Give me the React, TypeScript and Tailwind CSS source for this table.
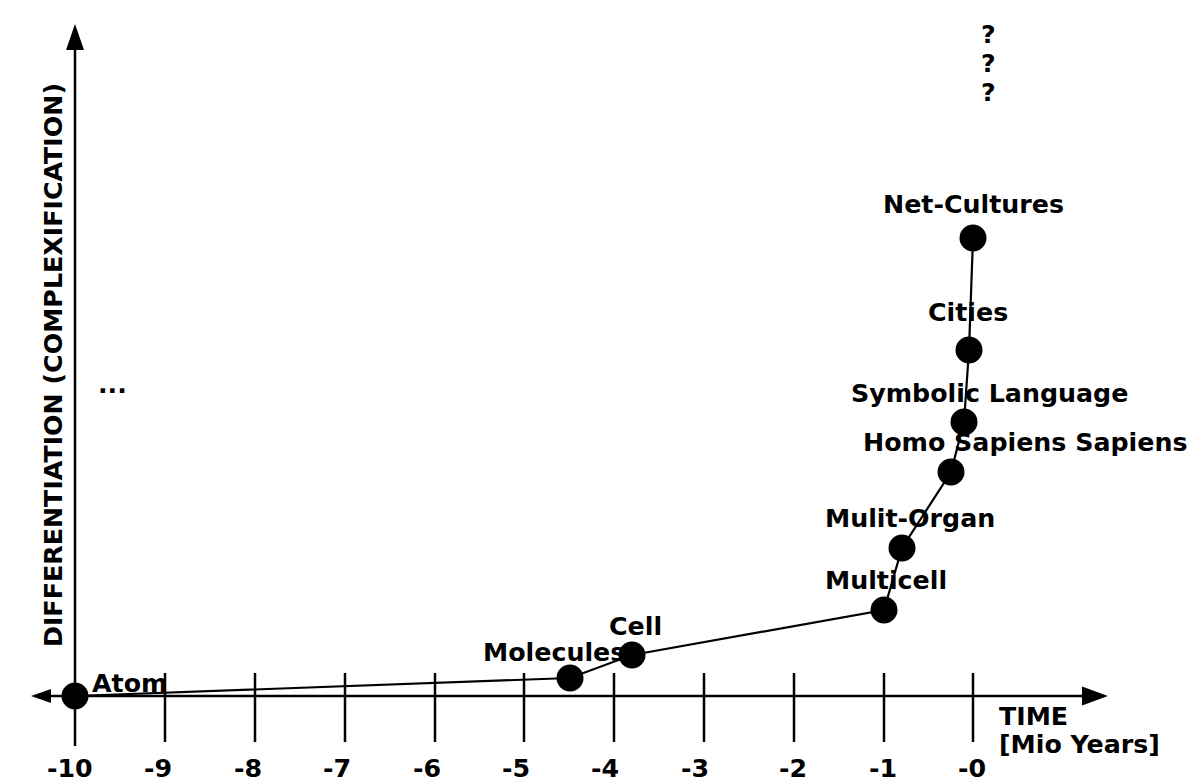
const nodes = [
  { x: 75, y: 696 },
  { x: 570, y: 678 },
  { x: 632, y: 655 },
  { x: 884, y: 610 },
  { x: 902, y: 548 },
  { x: 951, y: 472 },
  { x: 964, y: 422 },
  { x: 969, y: 350 },
  { x: 973, y: 238 },
];

const ticks = [165, 255, 345, 435, 524, 614, 704, 794, 884, 973];

const labels = [
  { text: "Atom", cls: "left-[92px] top-[671px]" },
  { text: "Molecules", cls: "left-[483px] top-[640px]" },
  { text: "Cell", cls: "left-[609px] top-[614px]" },
  { text: "Multicell", cls: "left-[825px] top-[568px]" },
  { text: "Mulit-Organ", cls: "left-[825px] top-[506px]" },
  { text: "Homo Sapiens Sapiens", cls: "left-[863px] top-[430px]" },
  { text: "Symbolic Language", cls: "left-[851px] top-[381px]" },
  { text: "Cities", cls: "left-[928px] top-[300px]" },
  { text: "Net-Cultures", cls: "left-[883px] top-[192px]" },
  { text: "?", cls: "left-[981px] top-[22px]" },
  { text: "?", cls: "left-[981px] top-[51px]" },
  { text: "?", cls: "left-[981px] top-[80px]" },
  { text: "...", cls: "left-[98px] top-[372px]" },
  { text: "TIME", cls: "left-[999px] top-[704px]" },
  { text: "[Mio Years]", cls: "left-[999px] top-[732px]" },
];

const tickLabels = [
  { text: "-10", cls: "left-[47px]" },
  { text: "-9", cls: "left-[144px]" },
  { text: "-8", cls: "left-[234px]" },
  { text: "-7", cls: "left-[323px]" },
  { text: "-6", cls: "left-[413px]" },
  { text: "-5", cls: "left-[502px]" },
  { text: "-4", cls: "left-[591px]" },
  { text: "-3", cls: "left-[681px]" },
  { text: "-2", cls: "left-[779px]" },
  { text: "-1", cls: "left-[869px]" },
  { text: "-0", cls: "left-[958px]" },
];

export default function App() {
  return (
    <div className="relative w-[1200px] h-[784px] bg-white overflow-hidden text-black font-['DejaVu_Sans',sans-serif] font-bold text-[25.3px] leading-none">
      <svg className="absolute inset-0" width="1200" height="784" viewBox="0 0 1200 784">
        {/* axes */}
        <line x1="51" y1="696" x2="1082" y2="696" stroke="#000" strokeWidth="2.5" />
        <line x1="75" y1="50" x2="75" y2="746" stroke="#000" strokeWidth="2.5" />
        <polygon points="75,24 66,50 84,50" fill="#000" />
        <polygon points="31,696 51,689 51,703" fill="#000" />
        <polygon points="1108,696 1082,686.5 1082,705.5" fill="#000" />
        {ticks.map((x) => (
          <line key={x} x1={x} y1="673" x2={x} y2="742" stroke="#000" strokeWidth="2.5" />
        ))}
        {/* growth curve */}
        <polyline
          points={nodes.map((n) => `${n.x},${n.y}`).join(" ")}
          fill="none"
          stroke="#000"
          strokeWidth="2.2"
        />
        {nodes.map((n) => (
          <circle key={`${n.x}-${n.y}`} cx={n.x} cy={n.y} r="13.5" fill="#000" />
        ))}
      </svg>

      {labels.map((l, i) => (
        <div key={i} className={`absolute whitespace-nowrap ${l.cls}`}>
          {l.text}
        </div>
      ))}

      {tickLabels.map((l) => (
        <div key={l.text} className={`absolute top-[756px] whitespace-nowrap ${l.cls}`}>
          {l.text}
        </div>
      ))}

      <div className="absolute left-[41px] top-[83px] whitespace-nowrap [writing-mode:vertical-rl] rotate-180">
        DIFFERENTIATION (COMPLEXIFICATION)
      </div>
    </div>
  );
}
